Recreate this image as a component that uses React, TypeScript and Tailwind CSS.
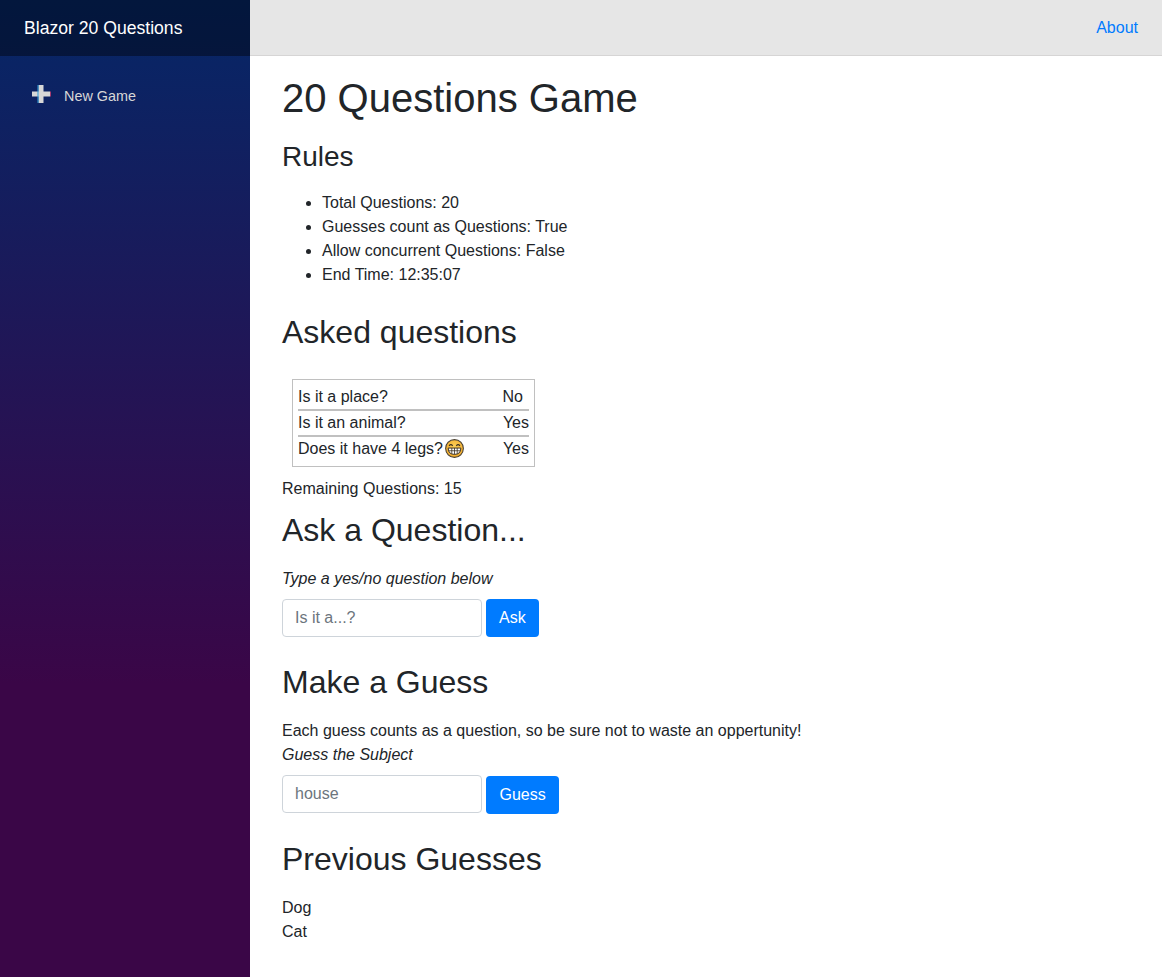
const Grin = () => (
  <svg className="inline-block align-[-4px] ml-[2px]" width="19" height="19" viewBox="0 0 21 21">
    <defs>
      <radialGradient id="face" cx="50%" cy="40%" r="60%">
        <stop offset="0%" stopColor="#fcd15a" />
        <stop offset="100%" stopColor="#f0a92a" />
      </radialGradient>
    </defs>
    <circle cx="10.5" cy="10.5" r="9.8" fill="url(#face)" stroke="#4a4030" strokeWidth="1.2" />
    <path d="M4.5 7.5 Q6.5 5 8.5 7.5" fill="none" stroke="#3b3020" strokeWidth="1.4" />
    <path d="M12.5 7.5 Q14.5 5 16.5 7.5" fill="none" stroke="#3b3020" strokeWidth="1.4" />
    <path d="M3.5 10 H17.5 Q17.5 17 10.5 17 Q3.5 17 3.5 10 Z" fill="#fff" stroke="#3b3020" strokeWidth="1.1" />
    <path d="M4 13 H17 M7.5 10 V16.5 M10.5 10 V17 M13.5 10 V16.5" stroke="#3b3020" strokeWidth="0.9" />
  </svg>
);

const questions = [
  { q: 'Is it a place?', a: 'No' },
  { q: 'Is it an animal?', a: 'Yes' },
  { q: 'Does it have 4 legs?', a: 'Yes', emoji: true },
];

export default function App() {
  return (
    <div className="flex min-h-[977px] font-['Liberation_Sans',Arial,sans-serif] text-base leading-6 text-[#212529] bg-white">
      {/* sidebar */}
      <div className="w-[250px] shrink-0 bg-[linear-gradient(180deg,#052767_0%,#3a0647_70%)]">
        <div className="h-14 bg-black/40 flex items-center pl-6 text-[17.6px] text-white">Blazor 20 Questions</div>
        <div className="pt-4 pl-8">
          <div className="flex items-center h-12 text-[14.4px] text-[#d7d7d7]">
            <svg width="19" height="18" viewBox="0 0 19 18" className="mr-[13px] mb-[4px]">
              <path d="M6.5 0 H11.5 V6.5 H18 V11.5 H11.5 V18 H6.5 V11.5 H0 V6.5 H6.5 Z" fill="#d7d7d7" />
              <path d="M5.5 0 H6.5 V18 H5.5 Z" fill="#2f9bd8" />
              <path d="M18 6.5 H19 V11.5 H18 Z" fill="#a83a6e" />
            </svg>
            New Game
          </div>
        </div>
      </div>

      {/* main */}
      <div className="flex-1 min-w-0">
        <div className="h-14 bg-[#e6e6e6] border-b border-[#d6d5d5] flex items-center justify-end pr-6">
          <a className="text-[#007bff]">About</a>
        </div>
        <div className="pl-8 pt-[18px]">
          <h1 className="text-[40px] leading-[48px] mb-2">20 Questions Game</h1>
          <h3 className="text-[28px] leading-[34px] mt-[18px] mb-[17px]">Rules</h3>
          <ul className="list-disc pl-10 mb-[18px]">
            <li>Total Questions: 20</li>
            <li>Guesses count as Questions: True</li>
            <li>Allow concurrent Questions: False</li>
            <li>End Time: 12:35:07</li>
          </ul>
          <h2 className="text-[32px] leading-[38px] mt-[26px] mb-[28px]">Asked questions</h2>
          <div className="ml-[10px] w-[243px] border border-[#c0c0c0] px-[5px] pt-[5px] pb-[3px]">
            {questions.map((row, i) => (
              <div key={row.q} className={`flex justify-between h-[26px] ${i < 2 ? 'border-b-2 border-[#c0c0c0]' : ''}`}>
                <span>{row.q}{row.emoji && <Grin />}</span>
                <span className={row.a === 'No' ? 'mr-[6px]' : ''}>{row.a}</span>
              </div>
            ))}
          </div>
          <p className="mt-[10px]">Remaining Questions: 15</p>
          <h2 className="text-[32px] leading-[38px] mt-[10px] mb-2">Ask a Question...</h2>
          <p className="italic mb-2 mt-[18px]">Type a yes/no question below</p>
          <div className="flex gap-1 items-start">
            <input readOnly placeholder="Is it a...?" className="w-[200px] h-[38px] px-3 border border-[#ced4da] rounded placeholder:text-[#6c757d] outline-none" />
            <button className="h-[38px] px-[13px] rounded bg-[#007bff] text-white">Ask</button>
          </div>
          <h2 className="text-[32px] leading-[38px] mt-[26px] mb-[18px]">Make a Guess</h2>
          <p>Each guess counts as a question, so be sure not to waste an oppertunity!</p>
          <p className="italic mb-2">Guess the Subject</p>
          <div className="flex gap-1 items-start">
            <input readOnly placeholder="house" className="w-[200px] h-[38px] px-3 border border-[#ced4da] rounded placeholder:text-[#6c757d] outline-none" />
            <button className="h-[38px] px-[13.5px] mt-px rounded bg-[#007bff] text-white">Guess</button>
          </div>
          <h2 className="text-[32px] leading-[38px] mt-[26px] mb-[18px]">Previous Guesses</h2>
          <p>Dog</p>
          <p>Cat</p>
        </div>
      </div>
    </div>
  );
}
